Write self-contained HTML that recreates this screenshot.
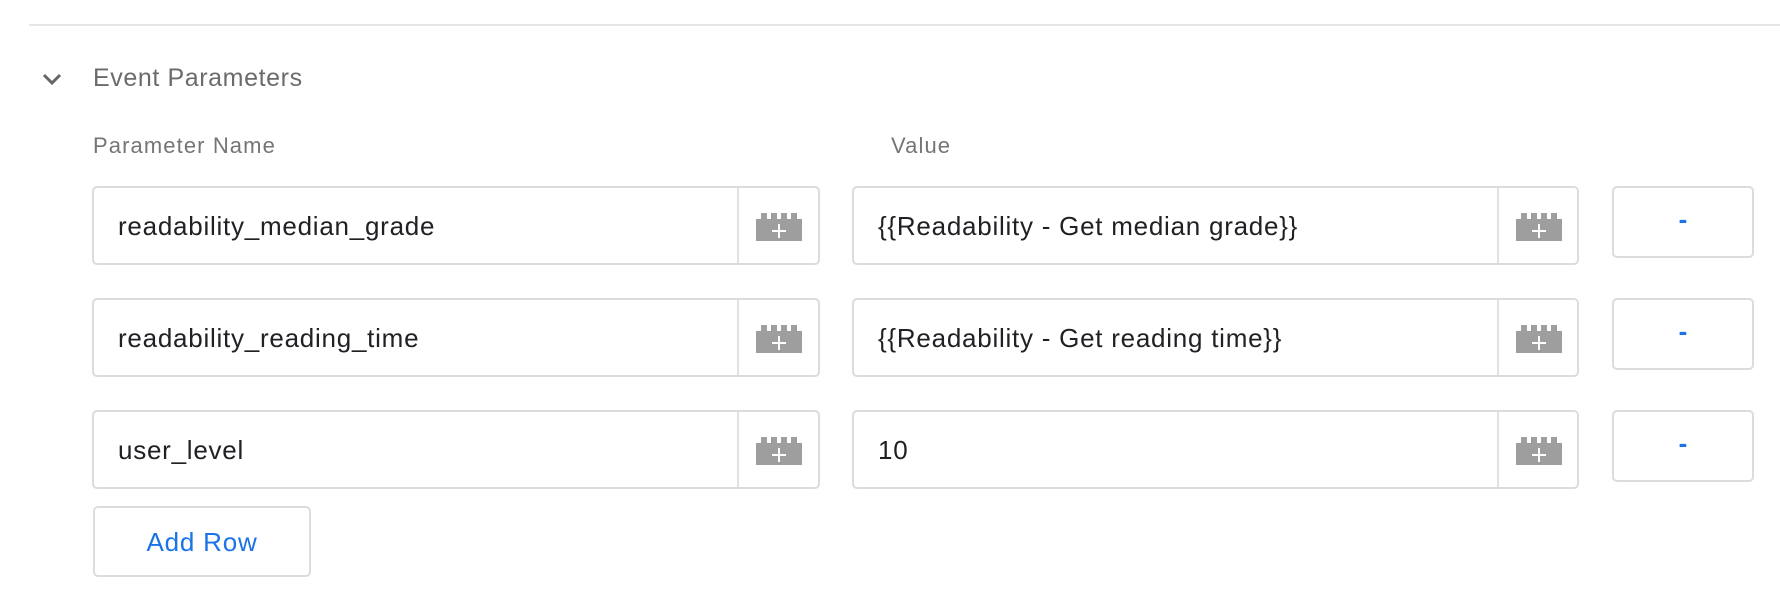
<!DOCTYPE html>
<html><head><style>
body{margin:0;width:1780px;height:592px;background:#fff;font-family:"Liberation Sans",Arial,sans-serif;position:relative;overflow:hidden}
.a{position:absolute}
.line{left:29px;top:24px;width:1751px;height:2px;background:#e6e6e6}
.h{left:93px;top:64px;font-size:25px;letter-spacing:0.6px;color:#6b6b6b}
.lbl{font-size:22px;letter-spacing:1.1px;color:#757575;top:133px}
.box{position:absolute;border:2px solid #dcdcdc;border-radius:5px;box-sizing:border-box;height:79px;background:#fff}
.box .t{position:absolute;left:24px;top:0;line-height:76px;font-size:26px;letter-spacing:0.75px;color:#202124;white-space:nowrap}
.box .d{position:absolute;top:0;bottom:0;width:2px;background:#e2e2e2}
.box svg{position:absolute;top:25px}
.min{position:absolute;border:2px solid #dcdcdc;border-radius:5px;box-sizing:border-box;width:142px;height:72px;left:1612px;color:#1a73e8;font-size:26px;font-weight:bold;text-align:center;line-height:62px}
.add{left:93px;top:506px;width:218px;height:71px;border:2px solid #dcdcdc;border-radius:5px;box-sizing:border-box;color:#1a73e8;font-size:26px;letter-spacing:0.8px;text-align:center;line-height:69px}
</style></head><body>
<div class="a line"></div>
<svg class="a" style="left:41px;top:70px" width="22" height="18" viewBox="0 0 22 18"><path d="M3 5 L11 13 L19 5" fill="none" stroke="#666" stroke-width="3"/></svg>
<div class="a h">Event Parameters</div>
<div class="a lbl" style="left:93px">Parameter Name</div>
<div class="a lbl" style="left:891px">Value</div>

<div class="box" style="left:92px;top:186px;width:728px"><div class="t">readability_median_grade</div><div class="d" style="left:643px"></div><svg style="left:662px" width="46" height="28" viewBox="0 0 46 28"><path d="M0 6h5V0h6v6h4V0h6v6h4V0h6v6h4V0h6v6h5v22H0z" fill="#9e9e9e"/><path d="M23 11v14M16 18h14" stroke="#fff" stroke-width="2"/></svg></div>
<div class="box" style="left:852px;top:186px;width:727px"><div class="t">{{Readability - Get median grade}}</div><div class="d" style="left:643px"></div><svg style="left:662px" width="46" height="28" viewBox="0 0 46 28"><path d="M0 6h5V0h6v6h4V0h6v6h4V0h6v6h4V0h6v6h5v22H0z" fill="#9e9e9e"/><path d="M23 11v14M16 18h14" stroke="#fff" stroke-width="2"/></svg></div>
<div class="min" style="top:186px">-</div>

<div class="box" style="left:92px;top:298px;width:728px"><div class="t">readability_reading_time</div><div class="d" style="left:643px"></div><svg style="left:662px" width="46" height="28" viewBox="0 0 46 28"><path d="M0 6h5V0h6v6h4V0h6v6h4V0h6v6h4V0h6v6h5v22H0z" fill="#9e9e9e"/><path d="M23 11v14M16 18h14" stroke="#fff" stroke-width="2"/></svg></div>
<div class="box" style="left:852px;top:298px;width:727px"><div class="t">{{Readability - Get reading time}}</div><div class="d" style="left:643px"></div><svg style="left:662px" width="46" height="28" viewBox="0 0 46 28"><path d="M0 6h5V0h6v6h4V0h6v6h4V0h6v6h4V0h6v6h5v22H0z" fill="#9e9e9e"/><path d="M23 11v14M16 18h14" stroke="#fff" stroke-width="2"/></svg></div>
<div class="min" style="top:298px">-</div>

<div class="box" style="left:92px;top:410px;width:728px"><div class="t">user_level</div><div class="d" style="left:643px"></div><svg style="left:662px" width="46" height="28" viewBox="0 0 46 28"><path d="M0 6h5V0h6v6h4V0h6v6h4V0h6v6h4V0h6v6h5v22H0z" fill="#9e9e9e"/><path d="M23 11v14M16 18h14" stroke="#fff" stroke-width="2"/></svg></div>
<div class="box" style="left:852px;top:410px;width:727px"><div class="t">10</div><div class="d" style="left:643px"></div><svg style="left:662px" width="46" height="28" viewBox="0 0 46 28"><path d="M0 6h5V0h6v6h4V0h6v6h4V0h6v6h4V0h6v6h5v22H0z" fill="#9e9e9e"/><path d="M23 11v14M16 18h14" stroke="#fff" stroke-width="2"/></svg></div>
<div class="min" style="top:410px">-</div>

<div class="a add">Add Row</div>
</body></html>
